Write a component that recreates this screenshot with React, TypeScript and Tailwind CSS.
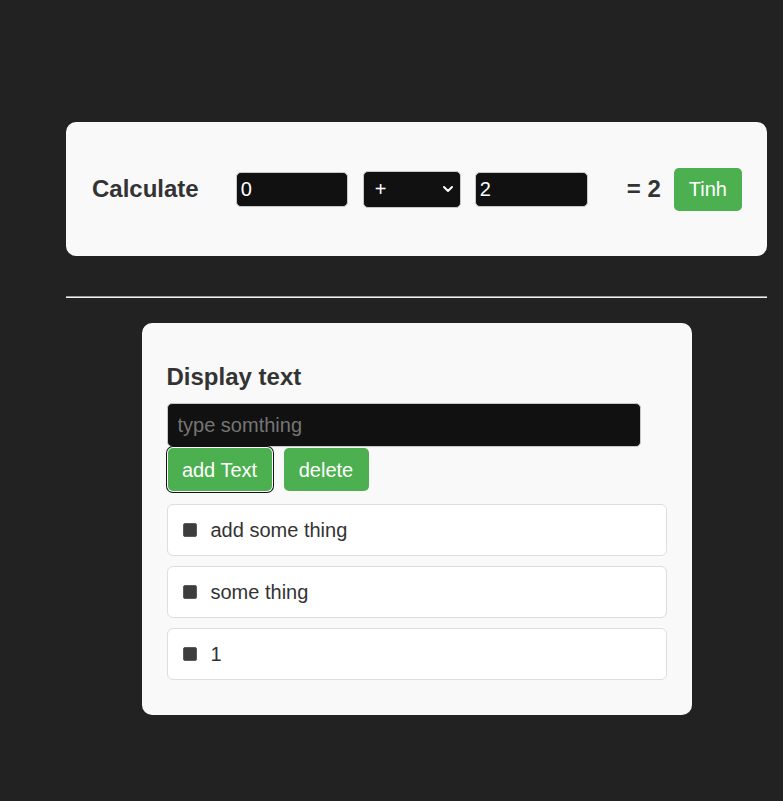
import React from "react";

export default function App() {
  const items = ["add some thing", "some thing", "1"];
  return (
    <div className="min-h-[801px] bg-[#222222] font-['Liberation_Sans',Arial,sans-serif] overflow-hidden">
      <div className="ml-[66px] w-[701px] pt-[122px]">
        {/* Calculator card */}
        <div className="h-[134px] rounded-[10px] bg-[#f9f9f9] flex items-center pl-[26px]">
          <span className="text-[24px] leading-[28px] font-bold text-[#333333]">Calculate</span>
          <input
            readOnly
            value="0"
            className="ml-[37px] w-[112px] h-[35px] rounded-[5px] border border-[#c8c8c8] bg-[#111111] px-[4px] text-[20px] text-white outline-none"
          />
          <div className="ml-[15px] w-[98px] h-[37px] rounded-[5px] border border-[#c8c8c8] bg-[#111111] flex items-center justify-between pl-[11px] pr-[6px] text-[20px] text-white">
            <span>+</span>
            <svg width="12" height="12" viewBox="0 0 12 12" fill="none">
              <polyline points="2,4 6,8 10,4" stroke="white" strokeWidth="2" strokeLinecap="round" strokeLinejoin="round" />
            </svg>
          </div>
          <input
            readOnly
            value="2"
            className="ml-[14px] w-[113px] h-[35px] rounded-[5px] border border-[#c8c8c8] bg-[#111111] px-[4px] text-[20px] text-white outline-none"
          />
          <span className="ml-[39px] text-[24px] leading-[28px] font-bold text-[#333333]">= 2</span>
          <button className="ml-[13px] h-[43px] px-[15px] rounded-[5px] bg-[#4caf50] text-white text-[20px]">Tinh</button>
        </div>

        {/* hr */}
        <div className="mt-[40px] h-[2px] border-t border-[#9d9d9d] border-b border-b-[#eeeeee]" />

        {/* Display text card */}
        <div className="mx-auto mt-[25px] w-[550px] rounded-[10px] bg-[#f9f9f9] px-[25px] pt-[40px] pb-[35px]">
          <div className="text-[24px] leading-[28px] font-bold text-[#333333]">Display text</div>
          <input
            placeholder="type somthing"
            className="mt-[12px] block w-[474px] h-[44px] rounded-[5px] border border-[#c8c8c8] bg-[#111111] px-[10px] text-[20px] text-white placeholder:text-[#757575] outline-none"
          />
          <div className="mt-[1px] flex">
            <button className="ml-[1px] h-[43px] w-[104px] rounded-[5px] bg-[#4caf50] text-white text-[20px] shadow-[0_0_0_1px_#ffffff,0_0_0_2px_#111111]">
              add Text
            </button>
            <button className="ml-[12px] h-[43px] w-[85px] rounded-[5px] bg-[#4caf50] text-white text-[20px]">delete</button>
          </div>
          <div className="mt-[13px] flex flex-col gap-[10px]">
            {items.map((t) => (
              <div
                key={t}
                className="h-[52px] rounded-[6px] border border-[#dddddd] bg-white flex items-center pl-[15px]"
              >
                <div className="w-[14px] h-[14px] rounded-[2px] bg-[#3d3d3d] border border-[#5a5a5a]" />
                <span className="ml-[14px] text-[20px] text-[#333333]">{t}</span>
              </div>
            ))}
          </div>
        </div>
      </div>
    </div>
  );
}
